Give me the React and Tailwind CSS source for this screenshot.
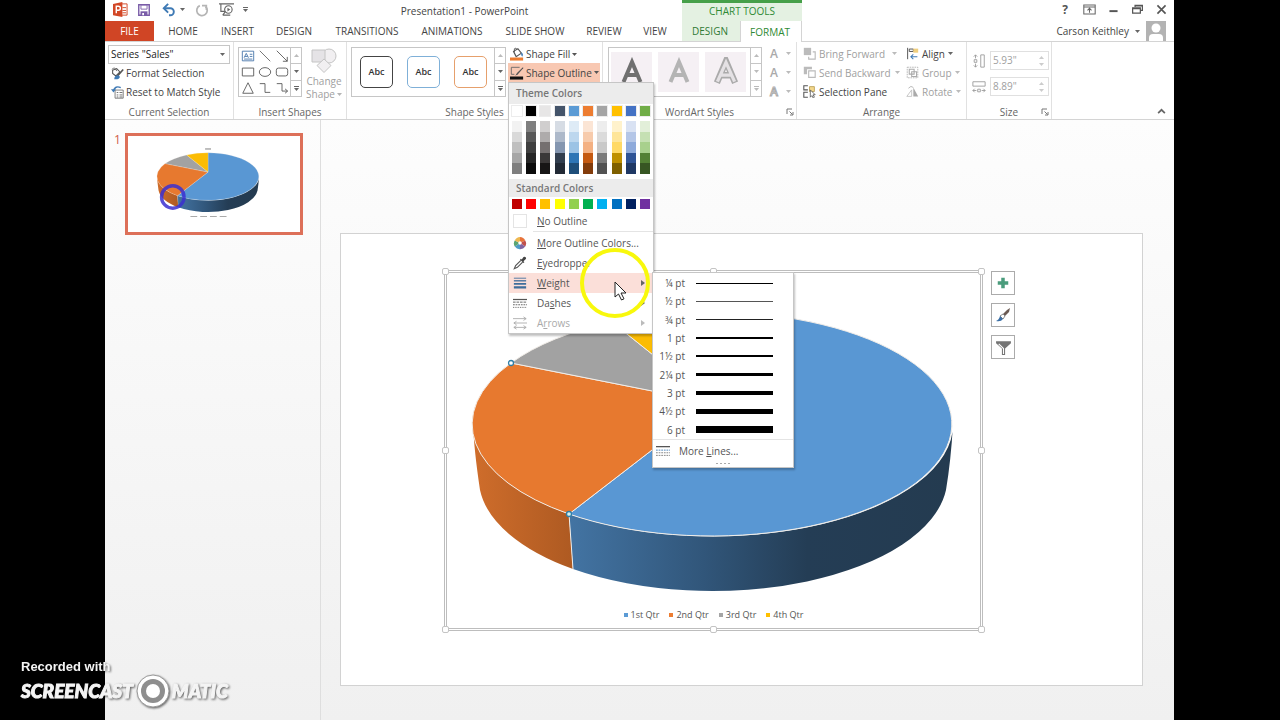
import React from "react";

const tabs = [
  { label: "HOME", width: "w-[58px]" },
  { label: "INSERT", width: "w-[51px]" },
  { label: "DESIGN", width: "w-[62px]" },
  { label: "TRANSITIONS", width: "w-[84px]" },
  { label: "ANIMATIONS", width: "w-[86px]" },
  { label: "SLIDE SHOW", width: "w-[80px]" },
  { label: "REVIEW", width: "w-[58px]" },
  { label: "VIEW", width: "w-[44px]" },
];

const themeColors = [
  { base: "#ffffff", shades: ["#f2f2f2", "#d9d9d9", "#bfbfbf", "#a6a6a6", "#7f7f7f"] },
  { base: "#000000", shades: ["#7f7f7f", "#595959", "#3f3f3f", "#262626", "#0c0c0c"] },
  { base: "#e7e6e6", shades: ["#d0cece", "#aeabab", "#757070", "#3a3838", "#171616"] },
  { base: "#44546a", shades: ["#d6dce4", "#adb9ca", "#8496b0", "#323f4f", "#222a35"] },
  { base: "#5b9bd5", shades: ["#deebf6", "#bdd7ee", "#9cc3e5", "#2e75b5", "#1e4e79"] },
  { base: "#ed7d31", shades: ["#fbe5d5", "#f7cbac", "#f4b183", "#c55a11", "#833c0b"] },
  { base: "#a5a5a5", shades: ["#ededed", "#dbdbdb", "#c9c9c9", "#7b7b7b", "#525252"] },
  { base: "#ffc000", shades: ["#fff2cc", "#fee599", "#ffd965", "#bf9000", "#7f6000"] },
  { base: "#4472c4", shades: ["#d9e2f3", "#b4c6e7", "#8eaadb", "#2f5496", "#1f3864"] },
  { base: "#70ad47", shades: ["#e2efd9", "#c5e0b3", "#a8d08d", "#538135", "#375623"] },
];

const standardColors = [
  "#c00000",
  "#ff0000",
  "#ffc000",
  "#ffff00",
  "#92d050",
  "#00b050",
  "#00b0f0",
  "#0070c0",
  "#002060",
  "#7030a0",
];

const weights = [
  { label: "¼ pt", line: "h-px bg-black" },
  { label: "½ pt", line: "h-px bg-[#555]" },
  { label: "¾ pt", line: "h-px bg-[#222]" },
  { label: "1 pt", line: "h-[2px] bg-black" },
  { label: "1½ pt", line: "h-[2px] bg-black" },
  { label: "2¼ pt", line: "h-[3px] bg-black" },
  { label: "3 pt", line: "h-[4px] bg-black" },
  { label: "4½ pt", line: "h-[5px] bg-black" },
  { label: "6 pt", line: "h-[7px] bg-black" },
];

const legend = [
  { label: "1st Qtr", color: "bg-[#5b9bd5]" },
  { label: "2nd Qtr", color: "bg-[#ed7d31]" },
  { label: "3rd Qtr", color: "bg-[#a5a5a5]" },
  { label: "4th Qtr", color: "bg-[#ffc000]" },
];

const Icon = ({ children, className = "w-[14px] h-[14px]" }) => (
  <svg viewBox="0 0 16 16" fill="none" className={`shrink-0 ${className}`} aria-hidden="true">
    {children}
  </svg>
);

const Caret = ({ className = "text-[#666]" }) => (
  <svg viewBox="0 0 5 3" className={`w-[5px] h-[3px] shrink-0 ${className}`} aria-hidden="true">
    <path d="M0 0h5L2.5 3z" fill="currentColor" />
  </svg>
);

const Launcher = () => (
  <button aria-label="More options" className="absolute right-[2px] bottom-[3px]">
    <Icon className="w-[8px] h-[8px]">
      <path d="M2 12V2h10M7 7l6 6M14 8v6H8" stroke="#777" strokeWidth="2" />
    </Icon>
  </button>
);

const QuickAccess = () => (
  <div className="flex items-center w-[146px] pl-2 pr-1 pb-[2px]">
    <Icon className="w-[15px] h-[15px]">
      <path d="M8 2h7v12H8z" fill="#fff" stroke="#d24726" />
      <path d="M10 6h4M10 9h4M10 11.500h4" stroke="#d24726" />
      <path d="M0 2l10-2v16L0 14z" fill="#d24726" />
      <path d="M3.500 12V4.500h2.200a2 2 0 010 4.300H3.500" stroke="#fff" strokeWidth="1.500" />
    </Icon>
    <button aria-label="Save" className="ml-[9px]">
      <Icon>
        <path d="M2 2h12v12H2z" stroke="#7a5ca8" strokeWidth="1.600" />
        <path d="M4.500 2.500h7v4.500h-7z" fill="#fff" stroke="#7a5ca8" />
        <path d="M4 9.500h8V14H4z" fill="#7a5ca8" />
        <path d="M6 11.500h2V14H6z" fill="#fff" />
      </Icon>
    </button>
    <button aria-label="Undo" className="ml-[11px] flex items-center gap-1">
      <Icon>
        <path d="M3 6h6.500a4 4 0 010 8H8" stroke="#3f7ab5" strokeWidth="2.200" />
        <path d="M7 1L2 6l5 5" stroke="#3f7ab5" strokeWidth="2.200" />
      </Icon>
      <Caret />
    </button>
    <button aria-label="Redo" className="ml-[10px]">
      <Icon>
        <path d="M5.500 3A6 6 0 1012 4" stroke="#b5b5b5" strokeWidth="2" />
        <path d="M8 3h5v5" stroke="#b5b5b5" strokeWidth="1.800" />
      </Icon>
    </button>
    <button aria-label="Start slide show" className="ml-[10px]">
      <Icon className="w-[15px] h-[15px]">
        <path d="M0 2h16M2 2v8h5M7 10l-3 4M4 14h8" stroke="#666" strokeWidth="1.200" />
        <circle cx="10" cy="8" r="4" fill="#fff" stroke="#666" strokeWidth="1.200" />
        <path d="M9 6l3 2-3 2z" fill="#666" />
      </Icon>
    </button>
    <button aria-label="Customize toolbar" className="ml-[9px] flex flex-col items-center gap-px">
      <span className="w-[5px] h-px bg-[#666]"></span>
      <Caret />
    </button>
  </div>
);

const WindowButtons = () => (
  <div className="flex-1 flex items-center justify-end gap-[11px] pr-[6px] pb-[2px]">
    <button aria-label="Help" className="w-[14px] text-[12px] leading-[14px] font-bold text-[#555]">
      ?
    </button>
    <button aria-label="Ribbon display options">
      <Icon className="w-[13px] h-[13px]">
        <path d="M1 2.500h14v11H1zM1 5h14M8 12V7M5.500 9L8 6.500 10.500 9" stroke="#666" strokeWidth="1.300" />
      </Icon>
    </button>
    <button aria-label="Minimize">
      <Icon className="w-[13px] h-[13px]">
        <path d="M3 10h10" stroke="#555" strokeWidth="2.400" />
      </Icon>
    </button>
    <button aria-label="Restore">
      <Icon className="w-[13px] h-[13px]">
        <path d="M5 5V3h9v6h-2M2 6h9.500v6.500H2zM2 7h9.500M5 3.500h9" stroke="#555" strokeWidth="1.500" />
      </Icon>
    </button>
    <button aria-label="Close">
      <Icon className="w-[13px] h-[13px]">
        <path d="M3 3l10 10M13 3L3 13" stroke="#555" strokeWidth="2" />
      </Icon>
    </button>
  </div>
);

const TitleBar = () => (
  <header className="flex h-[21px] bg-white">
    <QuickAccess />
    <h1 className="w-[431px] flex items-center justify-center pr-1 text-[10px] leading-3 text-[#444]">
      Presentation1 - PowerPoint
    </h1>
    <div className="w-[120px] h-[21px] border-t-[3px] border-[#46a049] bg-[#e4f1e2] flex items-center justify-center pb-[2px] text-[10px] leading-3 text-[#2f8a34]">
      CHART TOOLS
    </div>
    <WindowButtons />
  </header>
);

const TabBar = () => (
  <nav className="flex h-[21px] bg-white text-[10px] leading-3 text-[#444] border-b border-[#d4d4d4]">
    <button className="w-[49px] bg-[#d04525] text-white">FILE</button>
    {tabs.map((tab) => (
      <button key={tab.label} className={`${tab.width} whitespace-nowrap`}>
        {tab.label}
      </button>
    ))}
    <span className="w-[5px]"></span>
    <button className="w-[58px] bg-[#e4f1e2] pr-[2px] text-[#2f7a34]">DESIGN</button>
    <button className="w-[62px] h-[21px] bg-white border-x border-[#d4d4d4] pr-[2px] text-[#2f8a34]">
      FORMAT
    </button>
    <div className="flex-1 flex items-center justify-end gap-[6px] pr-2">
      <button className="flex items-center gap-[6px]">
        Carson Keithley <Caret />
      </button>
      <svg viewBox="0 0 20 20" className="w-[20px] h-[20px] bg-[#b3b3b3]" aria-hidden="true">
        <circle cx="10" cy="7" r="4.500" fill="#fff" />
        <path d="M3 20v-3q0-4 4-4h6q4 0 4 4v3z" fill="#fff" />
      </svg>
    </div>
  </nav>
);

const Group = ({ label, width, launcher, children }) => (
  <section className={`relative ${width} shrink-0 border-r border-[#e1e1e1] flex flex-col`}>
    <div className="h-[63px] flex">{children}</div>
    <h2 className="text-center text-[10px] leading-[14px] text-[#666]">{label}</h2>
    {launcher && <Launcher />}
  </section>
);

const GalleryScroll = ({ muted }) => {
  const tone = muted ? "text-[#bbb]" : "text-[#666]";
  return (
    <div className="w-[11px] border-l border-[#c6c6c6] flex flex-col divide-y divide-[#c6c6c6]">
      <button aria-label="Scroll up" className="flex-1 flex items-center justify-center">
        <Caret className="rotate-180 text-[#bbb]" />
      </button>
      <button aria-label="Scroll down" className="flex-1 flex items-center justify-center">
        <Caret className={tone} />
      </button>
      <button aria-label="More" className="flex-1 flex flex-col gap-px items-center justify-center">
        <span className={`w-[5px] h-px ${muted ? "bg-[#bbb]" : "bg-[#666]"}`}></span>
        <Caret className={tone} />
      </button>
    </div>
  );
};

const CurrentSelection = () => (
  <Group label="Current Selection" width="w-[129px]">
    <div className="pl-[3px] pt-[3px] w-[125px] flex flex-col items-start text-[10px] text-[#444]">
      <div className="relative w-full h-[19px] border border-[#c6c6c6] flex items-center">
        <select
          aria-label="Chart element"
          className="appearance-none w-full h-full bg-transparent pl-[2px] pb-px text-[10px] leading-4 text-[#222]"
        >
          <option>Series "Sales"</option>
        </select>
        <span className="absolute right-1 pointer-events-none">
          <Caret />
        </span>
      </div>
      <button className="h-[19px] pl-[3px] flex items-center gap-[2px] whitespace-nowrap">
        <Icon className="w-[13px] h-[13px]">
          <path d="M2 4l5-2 4 4-5 5-4-3z" fill="#fff" stroke="#555" strokeWidth="1.300" />
          <path d="M1 3q4-4 6 2" stroke="#555" />
          <path d="M15 3L8 11" stroke="#555" strokeWidth="2" />
          <path d="M9 10q-5 0-5 5 6 1 7-3z" fill="#3f7ab5" />
        </Icon>
        Format Selection
      </button>
      <button className="h-[19px] pl-[3px] flex items-center gap-[2px] whitespace-nowrap">
        <Icon className="w-[13px] h-[13px]">
          <path d="M5 5h10v10H5z" fill="#fff" stroke="#666" />
          <path d="M7 8h2M10.500 8H14M7 11h2M10.500 11H14M7 13.500h2M10.500 13.500H14" stroke="#555" />
          <path d="M12 2Q5-1 3 6" stroke="#3f7ab5" strokeWidth="1.800" />
          <path d="M0 4l3 4 3-4z" fill="#3f7ab5" />
        </Icon>
        Reset to Match Style
      </button>
    </div>
  </Group>
);

const shapes = [
  <g key="text">
    <path d="M1.500 2.500h13v11h-13z" stroke="#4472a8" />
    <path d="M3.500 10L6 5l2.500 5M4.500 8.500h3M10 6h3M10 8.500h3M3.500 11.500H13" stroke="#4472a8" />
  </g>,
  <path key="line" d="M2 2l12 12" stroke="#666" />,
  <path key="arrow" d="M2 2l12 12M14 9v5H9" stroke="#555" />,
  <path key="rect" d="M1.500 3.500h13v9h-13z" stroke="#555" />,
  <ellipse key="oval" cx="8" cy="8" rx="6.500" ry="5" stroke="#555" />,
  <rect key="round" x="1.500" y="3.500" width="13" height="9" rx="2.500" stroke="#555" />,
  <path key="tri" d="M8 2L14 14H2z" stroke="#555" />,
  <path key="elbow" d="M2 3h6v10h6" stroke="#555" />,
  <path key="elbowArrow" d="M2 3h6v8.500h6M11.500 9l3 2.500-3 2.500" stroke="#555" />,
];

const InsertShapes = () => (
  <Group label="Insert Shapes" width="w-[113px]">
    <div className="pl-1 pt-[5px] flex gap-1">
      <div className="w-[64px] h-[50px] border border-[#c6c6c6] flex">
        <div className="flex-1 grid grid-cols-3 place-items-center">
          {shapes.map((shape, index) => (
            <button key={index} aria-label="Shape">
              <Icon>{shape}</Icon>
            </button>
          ))}
        </div>
        <GalleryScroll />
      </div>
      <button className="w-[36px] h-[56px] flex flex-col items-center text-[10px] leading-[13px] text-[#a0a0a0]">
        <svg viewBox="0 0 26 26" className="w-[26px] h-[28px]" fill="none" aria-hidden="true">
          <circle cx="18" cy="8" r="7" fill="#f1eff1" stroke="#c4c4c4" />
          <path d="M1 2h13v12H1z" fill="#e5e3e6" stroke="#c4c4c4" />
          <path d="M13 11l7 6.500-7 7-7-7z" fill="#f1eff1" stroke="#c4c4c4" />
        </svg>
        <span>Change</span>
        <span className="flex items-center gap-[2px]">
          Shape <Caret className="text-[#b5b5b5]" />
        </span>
      </button>
    </div>
  </Group>
);

const menuItem = "w-full h-[20px] flex items-center gap-[10px] pl-1 pr-2 text-left";

const WeightMenu = () => (
  <div
    role="menu"
    className="absolute left-[143px] top-[189px] w-[142px] h-[196px] bg-white border border-[#c6c6c6] shadow-[1px_2px_2px_rgba(0,0,0,0.25)] flex flex-col text-[10px] text-[#555]"
  >
    <div className="h-[166px] grid grid-rows-9 pt-[1px]">
      {weights.map((weight) => (
        <button key={weight.label} role="menuitem" className="flex items-center gap-[11px]">
          <span className="w-[32px] text-right leading-4">{weight.label}</span>
          <span className={`w-[77px] ${weight.line}`}></span>
        </button>
      ))}
    </div>
    <button
      role="menuitem"
      className="h-[22px] border-t border-[#e4e4e4] flex items-center gap-[9px] pl-[3px]"
    >
      <Icon>
        <path d="M0 3h16" stroke="#555" strokeWidth="1.500" />
        <path d="M0 7h16" stroke="#3f7ab5" strokeDasharray="2 1" />
        <path d="M0 10h16M0 13h16" stroke="#777" strokeDasharray="2 1" />
      </Icon>
      <span>
        More <u>L</u>ines...
      </span>
    </button>
    <div className="flex justify-center gap-[2px] pt-[2px]">
      <span className="w-[2px] h-px bg-[#aaa]"></span>
      <span className="w-[2px] h-px bg-[#aaa]"></span>
      <span className="w-[2px] h-px bg-[#aaa]"></span>
      <span className="w-[2px] h-px bg-[#aaa]"></span>
    </div>
  </div>
);

const SubArrow = ({ className = "text-[#666]" }) => (
  <svg viewBox="0 0 4 6" className={`ml-auto w-[4px] h-[6px] ${className}`} aria-hidden="true">
    <path d="M0 0l4 3-4 3z" fill="currentColor" />
  </svg>
);

const OutlineMenu = () => (
  <div
    role="menu"
    className="absolute z-10 left-0 top-[19px] w-[146px] h-[252px] bg-white border border-[#c6c6c6] shadow-[1px_2px_2px_rgba(0,0,0,0.25)] text-[10px] leading-4 text-[#555]"
  >
    <h3 className="h-[21px] bg-[#ececec] pl-[7px] leading-[21px] font-semibold text-[#777]">
      Theme Colors
    </h3>
    <div className="flex justify-between px-[3px] pt-[2px]">
      {themeColors.map((color) => (
        <div key={color.base} className="w-[10px] h-[68px] flex flex-col">
          <button
            aria-label={color.base}
            className="h-[10px] mb-[5px] shrink-0 outline outline-[#ececec]"
            style={{ backgroundColor: color.base }}
          ></button>
          {color.shades.map((shade) => (
            <button
              key={shade}
              aria-label={shade}
              className="flex-1"
              style={{ backgroundColor: shade }}
            ></button>
          ))}
        </div>
      ))}
    </div>
    <h3 className="h-[18px] mt-[5px] bg-[#ececec] pl-[7px] leading-[18px] font-semibold text-[#777]">
      Standard Colors
    </h3>
    <div className="flex justify-between px-[3px] pt-[2px] pb-[2px]">
      {standardColors.map((color) => (
        <button
          key={color}
          aria-label={color}
          className="w-[10px] h-[10px]"
          style={{ backgroundColor: color }}
        ></button>
      ))}
    </div>
    <button role="menuitem" className={menuItem}>
      <span className="w-[14px] h-[14px] border border-[#e4e4e4] bg-white"></span>
      <span>
        <u>N</u>o Outline
      </span>
    </button>
    <div className="ml-6 mb-px border-t border-[#e4e4e4]"></div>
    <button role="menuitem" className={menuItem}>
      <Icon>
        <path d="M8 8L8 1A7 7 0 0114 5z" fill="#e8743b" />
        <path d="M8 8l6-3a7 7 0 010 7z" fill="#c0504d" />
        <path d="M8 8l6 4a7 7 0 01-6 3z" fill="#8064a2" />
        <path d="M8 8v7a7 7 0 01-6-3z" fill="#4f9bc6" />
        <path d="M8 8l-6 4a7 7 0 010-7z" fill="#5aa572" />
        <path d="M8 8L2 5a7 7 0 016-4z" fill="#eeb750" />
        <circle cx="8" cy="8" r="2" fill="#fff" />
      </Icon>
      <span>
        <u>M</u>ore Outline Colors...
      </span>
    </button>
    <button role="menuitem" className={menuItem}>
      <Icon>
        <path d="M9 5L3 11l-1.500 3.500L5 13l6-6" fill="#fff" stroke="#555" strokeWidth="1.300" />
        <path d="M8 4l4 4 1-1-1-1 3-3q0-3-3-2L10 4 9 3z" fill="#444" />
      </Icon>
      <span>
        <u>E</u>yedropper
      </span>
    </button>
    <button role="menuitem" className={`${menuItem} bg-[#fbdfd9]`}>
      <Icon>
        <path d="M1 2.500h14" stroke="#3f6e9c" />
        <path d="M1 5.500h14" stroke="#3f6e9c" strokeWidth="1.500" />
        <path d="M1 9h14" stroke="#3f6e9c" strokeWidth="2" />
        <path d="M1 13h14" stroke="#3f6e9c" strokeWidth="2.600" />
      </Icon>
      <span>
        <u>W</u>eight
      </span>
      <SubArrow />
    </button>
    <button role="menuitem" className={menuItem}>
      <Icon>
        <path d="M0 4h16" stroke="#555" strokeWidth="1.400" />
        <path d="M0 7h16" stroke="#555" strokeDasharray="3 1" />
        <path d="M0 10h16" stroke="#555" strokeDasharray="2 1" />
        <path d="M0 13h16" stroke="#555" strokeDasharray="1 1" />
      </Icon>
      <span>
        Da<u>s</u>hes
      </span>
      <SubArrow />
    </button>
    <button role="menuitem" className={`${menuItem} text-[#aaa]`}>
      <Icon>
        <path d="M0 3h15M12 1l3 2-3 2M1 8h15M4 6L1 8l3 2M1 13h14M4 11l-3 2 3 2M12 11l3 2-3 2" stroke="#aaa" />
      </Icon>
      <span>
        A<u>r</u>rows
      </span>
      <SubArrow className="text-[#bbb]" />
    </button>
    <WeightMenu />
    <svg
      viewBox="0 0 72 72"
      className="absolute left-[70px] top-[164px] w-[72px] h-[72px] pointer-events-none"
      fill="none"
      aria-hidden="true"
    >
      <circle cx="36" cy="36" r="33" stroke="#f8f80c" strokeWidth="4" />
      <path d="M36 35v15l3.500-3 3 6 2.500-1.200-3-5.800h5z" fill="#fff" stroke="#222" />
    </svg>
  </div>
);

const ShapeStyles = () => (
  <Group label="Shape Styles" width="w-[256px]">
    <div className="pl-1 pt-[5px] flex items-start">
      <div className="w-[155px] h-[50px] border border-[#c6c6c6] flex">
        <div className="flex-1 flex items-center gap-[14px] pl-2 text-[9px] font-semibold text-[#333]">
          <button className="w-[33px] h-[32px] rounded-[5px] border border-[#444]">Abc</button>
          <button className="w-[33px] h-[32px] rounded-[5px] border border-[#7fb0d8]">Abc</button>
          <button className="w-[33px] h-[32px] rounded-[5px] border border-[#e6a06c]">Abc</button>
        </div>
        <GalleryScroll />
      </div>
    </div>
    <div className="relative ml-[2px] pt-[3px] w-[92px] text-[10px] leading-3 text-[#444]">
      <button className="h-[18px] pl-[2px] flex items-center gap-[2px] whitespace-nowrap">
        <Icon>
          <path d="M4 5l5-3 4 5-6 4z" fill="#fff" stroke="#555" strokeWidth="1.300" />
          <path d="M5 6V2q2-2 3 1" stroke="#555" />
          <path d="M13 6q3 2 1 5-2-2-1-5z" fill="#3f7ab5" />
          <path d="M0 12h15v3.500H0z" fill="#ed7d31" />
        </Icon>
        Shape Fill <Caret className="text-[#555]" />
      </button>
      <div className="relative">
        <button
          aria-expanded="true"
          className="w-[92px] h-[19px] pl-[2px] bg-[#f8c8b2] flex items-center gap-[2px] whitespace-nowrap"
        >
          <Icon>
            <path d="M11 1.500H1.500v8H5" stroke="#666" />
            <path d="M15 1L8 8l-2 3 3-1.500 6-7z" fill="#555" />
            <path d="M0 12h15v3.500H0z" fill="#111" />
          </Icon>
          Shape Outline <Caret className="text-[#555]" />
        </button>
        <OutlineMenu />
      </div>
    </div>
  </Group>
);

const TextGlyph = ({ className }) => (
  <svg viewBox="0 0 28 28" fill="none" className={`w-[28px] h-[30px] ${className}`} aria-hidden="true">
    <path d="M5.500 24L14 4l8.500 20M9 17h10" stroke="currentColor" strokeWidth="4" />
  </svg>
);

const OutlinedGlyph = () => (
  <svg viewBox="0 0 28 28" fill="none" className="w-[30px] h-[30px]" aria-hidden="true">
    <path d="M5.500 24L14 4l8.500 20M9 17h10" stroke="#aaa" strokeWidth="6" />
    <path d="M6 23L14 5l8 18M9 17h10" stroke="#e4e1e4" strokeWidth="3" />
  </svg>
);

const WordArtStyles = () => (
  <Group label="WordArt Styles" width="w-[194px]" launcher>
    <div className="pl-[5px] pt-[5px] flex gap-[8px]">
      <div className="w-[154px] h-[50px] border border-[#c6c6c6] flex">
        <div className="flex-1 flex items-center gap-[6px] pl-[2px]">
          <button aria-label="Dark fill" className="w-[41px] h-[40px] bg-[#f5f0f4] grid place-items-center">
            <TextGlyph className="text-[#707070]" />
          </button>
          <button aria-label="Light fill" className="w-[41px] h-[40px] bg-[#f5f0f4] grid place-items-center">
            <TextGlyph className="text-[#b4b4b4]" />
          </button>
          <button aria-label="Outline" className="w-[41px] h-[40px] bg-[#f5f0f4] grid place-items-center">
            <OutlinedGlyph />
          </button>
        </div>
        <GalleryScroll muted />
      </div>
      <div className="flex flex-col gap-[6px] text-[12px] leading-[13px] font-semibold text-[#aaa]">
        <button aria-label="Text fill" className="flex items-center gap-[8px]">
          A <Caret className="text-[#bbb]" />
        </button>
        <button aria-label="Text outline" className="flex items-center gap-[8px]">
          A <Caret className="text-[#bbb]" />
        </button>
        <button aria-label="Text effects" className="flex items-center gap-[8px]">
          <span className="text-white [-webkit-text-stroke:1px_#aaa]">A</span>
          <Caret className="text-[#bbb]" />
        </button>
      </div>
    </div>
  </Group>
);

const arrangeButton = "h-[19px] flex items-center gap-[3px] whitespace-nowrap";

const Arrange = () => (
  <Group label="Arrange" width="w-[170px]">
    <div className="pl-[6px] pt-[2px] w-[109px] text-[10px] leading-3 text-[#a0a0a0]">
      <button className={arrangeButton}>
        <Icon className="w-[13px] h-[13px]">
          <path d="M1 1h9v9H1z" fill="#bbb" />
          <path d="M12 6h3v9H7v-3" stroke="#bbb" strokeWidth="1.400" />
        </Icon>
        Bring Forward <Caret className="ml-1 text-[#bbb]" />
      </button>
      <button className={arrangeButton}>
        <Icon className="w-[13px] h-[13px]">
          <path d="M1 1h10v3H5v6H1z" fill="#bbb" />
          <path d="M7 6h8v8H7z" stroke="#bbb" strokeWidth="1.400" />
        </Icon>
        Send Backward <Caret className="ml-px text-[#bbb]" />
      </button>
      <button className={`${arrangeButton} text-[#444]`}>
        <Icon className="w-[13px] h-[13px]">
          <path d="M6 1H1v5h5M6 9H1v6h5" stroke="#555" strokeWidth="1.300" />
          <path d="M8 2h6v6H8z" fill="#f3d78b" stroke="#b59a50" />
          <path d="M9 6v9l2-2 1.500 3 1.500-1-1.500-3H15z" fill="#fff" stroke="#555" />
        </Icon>
        Selection Pane
      </button>
    </div>
    <div className="pt-[2px] text-[10px] leading-3 text-[#a0a0a0]">
      <button className={`${arrangeButton} text-[#444]`}>
        <Icon className="w-[13px] h-[13px]">
          <path d="M2 1v14M4 2.500h5v3H4z" stroke="#555" strokeWidth="1.200" />
          <path d="M9 2h6v5H9z" fill="#f0cf7e" />
          <path d="M14 12H6M9 9l-3 3 3 3" stroke="#3f7ab5" strokeWidth="1.300" />
        </Icon>
        Align <Caret />
      </button>
      <button className={arrangeButton}>
        <Icon className="w-[13px] h-[13px]">
          <path d="M1.500 1.500h13v13h-13z" stroke="#aaa" strokeDasharray="2 1" />
          <path d="M4 4h6v6H4zM7 7h6v6H7z" stroke="#aaa" strokeWidth="1.300" />
        </Icon>
        Group <Caret className="text-[#bbb]" />
      </button>
      <button className={arrangeButton}>
        <Icon className="w-[13px] h-[13px]">
          <path d="M1 14h6V6z" stroke="#bbb" />
          <path d="M9 14V3l6 11z" fill="#aaa" />
          <path d="M3 4q3-4 6-1" stroke="#aaa" />
        </Icon>
        Rotate <Caret className="text-[#bbb]" />
      </button>
    </div>
  </Group>
);

const SizeField = ({ label, value, children }) => (
  <div className="flex items-center gap-1">
    {children}
    <div className="flex items-center w-[59px] h-[19px] border border-[#e0e0e0] pl-[2px] pr-1">
      <input
        type="text"
        aria-label={label}
        defaultValue={value}
        className="w-0 grow h-[17px] text-[10px] leading-[17px] text-[#a0a0a0] outline-none"
      />
      <span className="flex flex-col gap-1">
        <Caret className="rotate-180 text-[#ccc]" />
        <Caret className="text-[#ccc]" />
      </span>
    </div>
  </div>
);

const Size = () => (
  <Group label="Size" width="w-[85px]" launcher>
    <div className="pl-[5px] pt-[9px] flex flex-col gap-[7px]">
      <SizeField label="Height" value={'5.93"'}>
        <Icon>
          <path d="M10 1h4v14h-4zM4 1v4M4 11v4M2 3l2-2 2 2M2 13l2 2 2-2M2.500 6.500h3v3h-3z" stroke="#999" />
        </Icon>
      </SizeField>
      <SizeField label="Width" value={'8.89"'}>
        <Icon>
          <path d="M1 2h14v5H1zM1 12h4M11 12h4M3 10l-2 2 2 2M13 10l2 2-2 2M6.500 10.500h3v3h-3z" stroke="#999" />
        </Icon>
      </SizeField>
    </div>
  </Group>
);

const Ribbon = () => (
  <div className="flex h-[78px] bg-white border-b border-[#d4d4d4]">
    <CurrentSelection />
    <InsertShapes />
    <ShapeStyles />
    <WordArtStyles />
    <Arrange />
    <Size />
    <div className="flex-1 flex items-end justify-end p-[3px] pr-[8px]">
      <button aria-label="Collapse the ribbon">
        <Icon className="w-[9px] h-[9px]">
          <path d="M2 11l6-6 6 6" stroke="#666" strokeWidth="3" />
        </Icon>
      </button>
    </div>
  </div>
);

const PieChart = ({ id }) => (
  <g stroke="#f1ede8" strokeWidth="1" strokeLinejoin="round">
    <defs>
      <linearGradient id={`${id}-blue`}>
        <stop offset="0" stopColor="#4374a3" />
        <stop offset="0.35" stopColor="#31567a" />
        <stop offset="0.62" stopColor="#243d55" />
        <stop offset="1" stopColor="#243b50" />
      </linearGradient>
      <linearGradient id={`${id}-orange`}>
        <stop offset="0" stopColor="#cf6d2b" />
        <stop offset="1" stopColor="#ae5a22" />
      </linearGradient>
    </defs>
    <path
      d="M473 424A240 112 0 0 0 569 514L573 569A235 113 0 0 1 480 490Q474 450 473 424z"
      fill={`url(#${id}-orange)`}
      stroke="none"
    />
    <path
      d="M569 514A240 112 0 0 0 953 424Q951 460 946 490A235 113 0 0 1 573 569z"
      fill={`url(#${id}-blue)`}
      stroke="none"
    />
    <path d="M569 514L573 569" />
    <path d="M713 403V312A240 112 0 1 1 569 514z" fill="#5997d3" />
    <path d="M713 403L569 514A240 112 0 0 1 511 363z" fill="#e7792f" />
    <path d="M713 403L511 363A240 112 0 0 1 612 322z" fill="#a2a2a2" />
    <path d="M713 403L612 322A240 112 0 0 1 713 312z" fill="#fbbc04" />
  </g>
);

const SlidePanel = () => (
  <aside className="w-[216px] shrink-0 border-r border-[#dedede] flex items-start gap-[3px] pl-[9px] pt-[13px]">
    <span className="w-[8px] text-[12px] leading-[14px] text-[#d0604a]">1</span>
    <button aria-label="Slide 1" className="w-[178px] h-[102px] border-[3px] border-[#dd7059] bg-white">
      <svg viewBox="340 233 802 452" className="w-full h-full block" aria-hidden="true">
        <path d="M699 294h28" stroke="#aaa" strokeWidth="7" />
        <PieChart id="thumb" />
        <path d="M630 612h170" stroke="#aaa" strokeWidth="5" strokeDasharray="32 14" />
        <circle cx="547" cy="520" r="53" fill="none" stroke="#3b2fd0" strokeOpacity="0.85" strokeWidth="16" />
      </svg>
    </button>
  </aside>
);

const handle = "absolute w-[7px] h-[7px] rounded-[2px] border border-[#c4c4c4] bg-white";

const ChartFrame = () => (
  <div className="relative w-[539px] h-[361px] shrink-0 border-[3px] border-double border-[#bdbdbd] pt-[27px]">
    <svg viewBox="447 300 533 300" className="w-full h-[300px] block" role="img" aria-label="Sales by quarter">
      <PieChart id="chart" />
      <circle cx="511" cy="363" r="2.500" fill="#fff" stroke="#2f7fa8" strokeWidth="1.300" />
      <circle cx="569" cy="514" r="2.500" fill="#d8f3f0" stroke="#2f7fa8" strokeWidth="1.300" />
    </svg>
    <ul className="h-[29px] flex items-center justify-center gap-[10px] text-[9px] leading-3 text-[#555]">
      {legend.map((item) => (
        <li key={item.label} className="flex items-center gap-[3px]">
          <span className={`w-[4px] h-[4px] ${item.color}`}></span>
          {item.label}
        </li>
      ))}
    </ul>
    <span className={`${handle} -left-[5px] -top-[5px]`}></span>
    <span className={`${handle} left-1/2 -ml-1 -top-[5px]`}></span>
    <span className={`${handle} -right-[5px] -top-[5px]`}></span>
    <span className={`${handle} -left-[5px] top-1/2 -mt-1`}></span>
    <span className={`${handle} -right-[5px] top-1/2 -mt-1`}></span>
    <span className={`${handle} -left-[5px] -bottom-[5px]`}></span>
    <span className={`${handle} left-1/2 -ml-1 -bottom-[5px]`}></span>
    <span className={`${handle} -right-[5px] -bottom-[5px]`}></span>
  </div>
);

const chartButton = "w-[24px] h-[24px] bg-white border border-[#ababab] grid place-items-center";

const Slide = () => (
  <main className="flex-1 pl-[19px] pr-[31px] pt-[113px]">
    <div className="w-full min-h-[453px] bg-white border border-[#d2d2d2] flex items-start pl-[103px] pt-[36px] gap-[8px]">
      <ChartFrame />
      <div className="flex flex-col gap-2 pt-px">
        <button aria-label="Chart elements" className={chartButton}>
          <Icon>
            <path d="M8 2v12M2 8h12" stroke="#4a9c7c" strokeWidth="4" />
          </Icon>
        </button>
        <button aria-label="Chart styles" className={chartButton}>
          <Icon className="w-[16px] h-[16px]">
            <path d="M15 1l-1 4-4 4-2-2 4-4z" fill="#6b5a52" />
            <path d="M8 7l2 2-2 3-3-3z" fill="#fff" stroke="#888" />
            <path d="M5 9l3 3q-2 3-7 2 3-1 4-5z" fill="#3a6ea5" />
          </Icon>
        </button>
        <button aria-label="Chart filters" className={chartButton}>
          <Icon className="w-[17px] h-[17px]">
            <path d="M1 2h14v2L9.500 9v6h-3V9L1 4z" fill="#757575" />
            <path d="M3.500 4.500L8 9v5" stroke="#fff" />
          </Icon>
        </button>
      </div>
    </div>
  </main>
);

const Watermark = () => (
  <div className="absolute left-[21px] bottom-[12px] font-['Liberation_Sans'] font-bold text-[#f4f4f4] drop-shadow-[1px_1px_1px_rgba(0,0,0,0.6)]">
    <p className="text-[13px] leading-[14px]">Recorded with</p>
    <div className="flex items-center h-[34px] font-['Lato',sans-serif] text-[19px] italic font-black">
      <span className="[-webkit-text-stroke:1px_#f4f4f4]">SCREENCAST</span>
      <svg viewBox="0 0 36 36" className="ml-[2px] w-[36px] h-[36px]" aria-hidden="true">
        <circle cx="18" cy="18" r="16" fill="#fff" stroke="#999" />
        <circle cx="18" cy="18" r="12" fill="#8e8e8e" />
        <circle cx="18" cy="18" r="7" fill="#fff" />
      </svg>
      <span className="ml-px [-webkit-text-stroke:1px_#f4f4f4]">MATIC</span>
    </div>
  </div>
);

const App = () => {
  return (
    <div className="relative min-h-screen bg-black pl-[105px] pr-[106px] flex font-['Open_Sans','Noto_Sans',sans-serif]">
      <div className="flex-1 flex flex-col bg-white">
        <TitleBar />
        <TabBar />
        <Ribbon />
        <div className="flex-1 flex bg-linear-to-b from-[#fdfdfd] to-[#f0f0f0]">
          <SlidePanel />
          <Slide />
        </div>
      </div>
      <Watermark />
    </div>
  );
};

export default App;
